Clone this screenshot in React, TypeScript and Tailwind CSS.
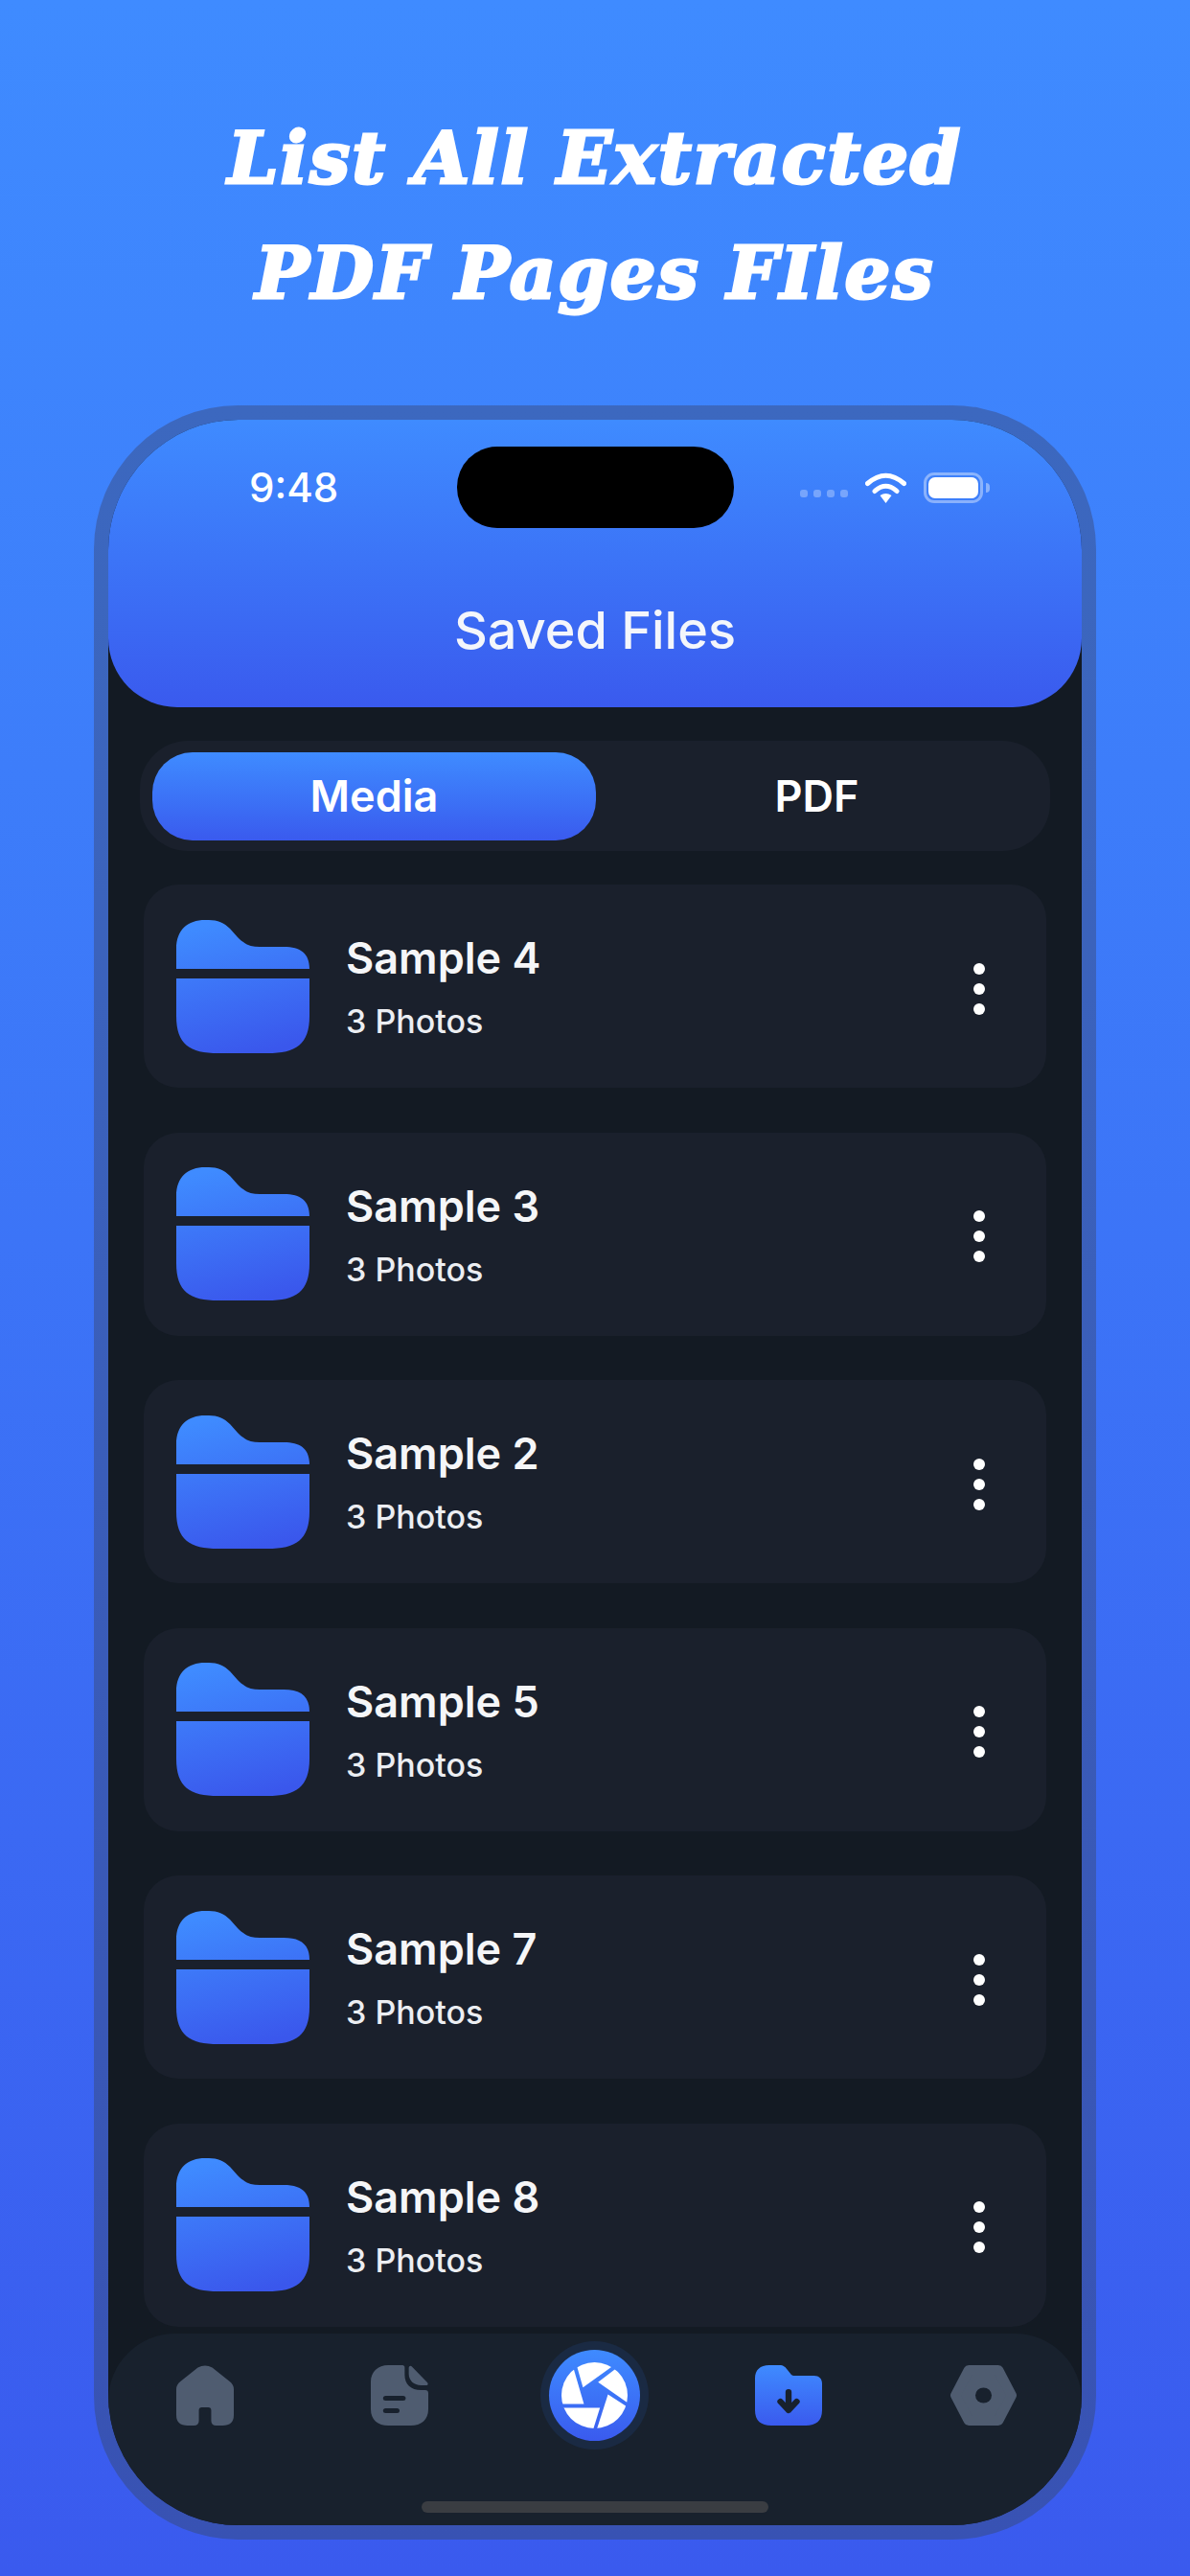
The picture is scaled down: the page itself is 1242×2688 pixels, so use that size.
const folders = ["Sample 4", "Sample 3", "Sample 2", "Sample 5", "Sample 7", "Sample 8"];

function FolderIcon({ id }: { id: string }) {
    return (
        <svg width="139" height="139" viewBox="0 0 139 139" className="shrink-0">
            <defs>
                <linearGradient id={id} gradientUnits="userSpaceOnUse" x1="50" y1="0" x2="85" y2="139">
                    <stop offset="0" stopColor="#3f8bff" />
                    <stop offset="1" stopColor="#3a57ec" />
                </linearGradient>
            </defs>
            <path
                fill={`url(#${id})`}
                d="M0 51V30C0 10 12 0 30 0H34C43 0 50 3 56 9L64 18C71 25 77 28 87 28H112C130 28 139 35 139 51ZM0 61H139V100C139 130 125 139 95 139H44C14 139 0 130 0 100Z"
            />
        </svg>
    );
}

function Aperture() {
    return (
        <svg width="69" height="69" viewBox="138 135 206 206">
            <defs>
                <clipPath id="lens">
                    <circle cx="241" cy="238" r="103" />
                </clipPath>
            </defs>
            <g fill="#fff" clipPath="url(#lens)">
                <polygon points="205,213 175,108 320,90 310,138" />
                <polygon points="208,265 170,135 110,150 110,265" />
                <polygon points="258,277 120,277 120,380 228,372" />
                <polygon points="283,235 365,288 360,385 235,385" />
                <polygon points="252,197 340,130 380,130 370,279" />
            </g>
        </svg>
    );
}

function TabBar() {
    return (
        <div className="relative h-[200px] shrink-0 rounded-t-[70px] bg-[#18212d] pl-[71px] pt-[8px]">
            <div className="flex h-[113px] items-center">
                {/* home */}
                <svg width="60" height="63" viewBox="0 0 56 63" preserveAspectRatio="none">
                    <path
                        fill="#4f5c70"
                        d="M21 2.6Q28 -1.5 35 2.6L52 17Q56 20.5 56 25V52Q56 63 45 63H39Q34 63 34 58V47Q34 44 31 44H25Q22 44 22 47V58Q22 63 17 63H11Q0 63 0 52V25Q0 20.5 4 17Z"
                    />
                </svg>
                {/* doc */}
                <svg width="60" height="63" viewBox="0 0 56 63" preserveAspectRatio="none" className="ml-[143px]">
                    <path
                        fill="#4f5c70"
                        d="M17 0H31C32 0 33 1 33 2V10C33 20 39 26 49 26H53C55 26 56 27 56 29V46C56 57 49 63 39 63H17C7 63 0 57 0 46V17C0 7 7 0 17 0Z"
                    />
                    <path fill="#4f5c70" d="M37 3C37 1 39 0 40 1.500L55 18C56 19 56 21 54 21H49C42 21 37 16 37 9Z" />
                    <rect x="12" y="32" width="22" height="5" rx="2.500" fill="#18212d" />
                    <rect x="12" y="45" width="16" height="5" rx="2.500" fill="#18212d" />
                </svg>
                {/* camera */}
                <div className="ml-[117px] flex h-[113px] w-[113px] items-center justify-center rounded-full bg-[#1a2a43]">
                    <div className="flex h-[95px] w-[95px] items-center justify-center rounded-full bg-linear-to-b from-[#3f8bff] to-[#3a5aee]">
                        <Aperture />
                    </div>
                </div>
                {/* saved */}
                <svg width="70" height="63" viewBox="0 0 66 63" preserveAspectRatio="none" className="ml-[111px]">
                    <defs>
                        <linearGradient id="navFolder" x1="0" y1="0" x2="0" y2="1">
                            <stop offset="0" stopColor="#3f8bff" />
                            <stop offset="1" stopColor="#3a5aee" />
                        </linearGradient>
                    </defs>
                    <path
                        fill="url(#navFolder)"
                        d="M14 0H24C28 0 30 2 32 5L35 9C36 10.500 37 11 39 11H58C63 11 66 14 66 19V47C66 58 60 63 50 63H16C6 63 0 58 0 47V14C0 5 5 0 14 0Z"
                    />
                    <path
                        fill="none"
                        stroke="#18212d"
                        strokeWidth="6"
                        strokeLinecap="round"
                        strokeLinejoin="round"
                        d="M33 28V47M25 38L33 47L41 38"
                    />
                </svg>
                {/* settings */}
                <svg width="69" height="63" viewBox="0 0 65 63" preserveAspectRatio="none" className="ml-[134px]">
                    <polygon
                        points="18,5 47,5 60,31.500 47,58 18,58 5,31.500"
                        fill="#4f5c70"
                        stroke="#4f5c70"
                        strokeWidth="10"
                        strokeLinejoin="round"
                    />
                    <circle cx="32.500" cy="31.500" r="8" fill="#18212d" />
                </svg>
            </div>
            <div className="absolute bottom-[13px] left-1/2 h-[12px] w-[362px] -translate-x-1/2 rounded-full bg-[#3a3d42]" />
        </div>
    );
}

export default function App() {
    return (
        <div className="min-h-screen overflow-hidden bg-linear-to-b from-[#3f8bff] to-[#3a5aee] pt-[105px] font-['Inter',sans-serif] text-white">
            <h1 className="text-center font-['DejaVu_Serif',serif] text-[75px] font-bold italic leading-[120px] tracking-[2px] [-webkit-text-stroke:3px_white]">
                List All Extracted
                <br />
                PDF Pages FIles
            </h1>

            {/* Phone */}
            <div className="mx-[98px] mt-[78px] h-[2227px] rounded-[150px] bg-linear-to-b from-[#3c68bf] to-[#3852b3] p-[15px]">
                <div className="flex h-full flex-col overflow-hidden rounded-[136px] bg-[#131a23]">
                    {/* Header */}
                    <div className="h-[300px] shrink-0 rounded-b-[72px] bg-linear-to-b from-[#3f8bff] to-[#3a5aee]">
                        <div className="flex items-center pt-[28px]">
                            <div className="w-[364px] pl-[147px] text-[42px] font-medium leading-[85px]">9:48</div>
                            <div className="h-[85px] w-[289px] rounded-[42px] bg-black" />
                            <div className="ml-[69px] flex items-center">
                                <div className="mt-[12px] flex gap-[6px]">
                                    <div className="h-[8px] w-[8px] rounded-[3px] bg-white/30" />
                                    <div className="h-[8px] w-[8px] rounded-[3px] bg-white/30" />
                                    <div className="h-[8px] w-[8px] rounded-[3px] bg-white/30" />
                                    <div className="h-[8px] w-[8px] rounded-[3px] bg-white/30" />
                                </div>
                                <svg width="43" height="32" viewBox="0 0 43 32" className="ml-[18px]">
                                    <path d="M2.500 11.500Q21.500 -5 40.500 11.500" fill="none" stroke="#fff" strokeWidth="5" strokeLinecap="round" />
                                    <path d="M10 19.500Q21.500 9 33 19.500" fill="none" stroke="#fff" strokeWidth="5" strokeLinecap="round" />
                                    <path d="M15.500 24Q21.500 20 27.500 24L21.500 32Z" fill="#fff" />
                                </svg>
                                <div className="ml-[18px] h-[32px] w-[62px] rounded-[11px] border-[3px] border-white/40 p-[2px]">
                                    <div className="h-full w-full rounded-[7px] bg-white" />
                                </div>
                                <div className="ml-[3px] h-[10px] w-[4px] rounded-r-full bg-white/40" />
                            </div>
                        </div>
                        <div className="mt-[75px] text-center text-[54px] font-medium leading-[64px] text-[#f4f6fb]">Saved Files</div>
                    </div>

                    {/* Segments */}
                    <div className="mx-[33px] mt-[35px] flex h-[115px] shrink-0 items-center rounded-[50px] bg-[#1a202c] px-[13px] text-[45px] font-semibold">
                        <div className="flex h-[92px] w-[463px] items-center justify-center rounded-[42px] bg-linear-to-b from-[#3f8bff] to-[#3a5aee]">
                            Media
                        </div>
                        <div className="flex-1 text-center">PDF</div>
                    </div>

                    {/* List */}
                    <div className="mt-[35px] flex min-h-0 flex-1 flex-col gap-[46.500px] overflow-hidden px-[37px]">
                        {folders.map((name, i) => (
                            <div key={name} className="flex h-[212px] shrink-0 items-center rounded-[36px] bg-[#1a202c] pl-[34px] pr-[64px]">
                                <FolderIcon id={`folder${i}`} />
                                <div className="ml-[38px] flex-1">
                                    <div className="mt-[1px] text-[45px] font-semibold leading-[53px] text-[#f5f6f8]">{name}</div>
                                    <div className="mt-[19px] text-[34px] font-medium leading-[41px] text-[#eceef2]">3 Photos</div>
                                </div>
                                <div className="mt-[5px] flex flex-col gap-[9px]">
                                    <div className="h-[12px] w-[12px] rounded-full bg-white" />
                                    <div className="h-[12px] w-[12px] rounded-full bg-white" />
                                    <div className="h-[12px] w-[12px] rounded-full bg-white" />
                                </div>
                            </div>
                        ))}
                    </div>

                    <TabBar />
                </div>
            </div>
        </div>
    );
}
